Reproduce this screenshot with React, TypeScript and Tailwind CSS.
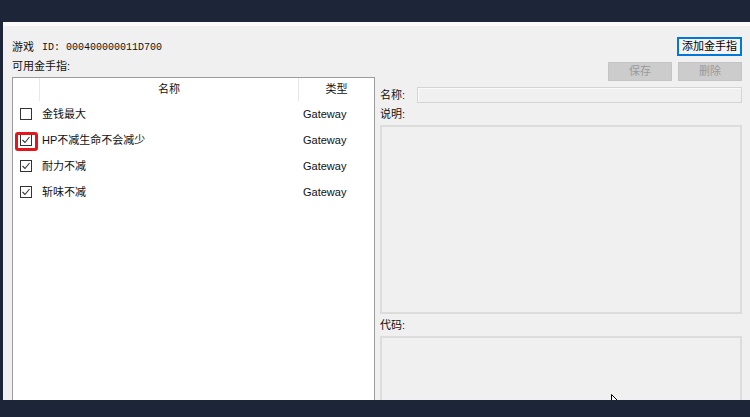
import React from 'react';

const cjk = '"Liberation Sans", "Noto Sans CJK SC", sans-serif';

const rows = [
  { name: '金钱最大', type: 'Gateway', checked: false, mark: false },
  { name: 'HP不减生命不会减少', type: 'Gateway', checked: true, mark: true },
  { name: '耐力不减', type: 'Gateway', checked: true, mark: false },
  { name: '斩味不减', type: 'Gateway', checked: true, mark: false },
];

const CheckBox: React.FC<{ checked: boolean; mark?: boolean }> = ({ checked, mark }) => (
  <span className="relative flex h-[12px] w-[12px] items-center justify-center border border-[#333333] bg-white">
    {checked && (
      <svg width="10" height="10" viewBox="0 0 10 10">
        <path d="M1.5 5 L4 7.5 L8.5 2" fill="none" stroke="#333333" strokeWidth="1.1" />
      </svg>
    )}
    {mark && (
      <span className="absolute left-[-6px] top-[-3px] h-[19px] w-[23px] rounded-[3px] border-[3px] border-[#e3161c]" />
    )}
  </span>
);

const App: React.FC = () => {
  return (
    <div
      className="flex h-[417px] w-[750px] flex-col overflow-hidden bg-[#1c2638] pl-[3px] pt-[22px] text-[11px] text-[#111111]"
      style={{ fontFamily: cjk }}
    >
      <div className="relative h-[378px] overflow-hidden border-t-[4px] border-[#fafafa] bg-[#f0f0f0] pl-[9px] pr-[8px]">
        {/* top row */}
        <div className="mt-[11px] flex h-[19px] items-center justify-between">
          <div className="flex items-center pt-[2px]">
            <span>游戏</span>
            <span className="ml-[8px] text-[10px]" style={{ fontFamily: '"Liberation Mono", monospace' }}>
              ID: 000400000011D700
            </span>
          </div>
          <button className="h-[19px] w-[65px] border-2 border-[#0078d7] bg-[#f4f4f4] text-[11px] leading-none text-black">
            添加金手指
          </button>
        </div>

        <div className="flex">
          {/* left column */}
          <div className="flex w-[363px] flex-col">
            <div className="flex h-[21px] items-center">可用金手指:</div>
            <div className="h-[330px] border border-[#9c9c9c] bg-white">
              <div className="flex h-[23px] items-center">
                <div className="h-full w-[27px] border-r border-[#e8e8e8]" />
                <div className="flex h-full w-[259px] items-center justify-center border-r border-[#e8e8e8]">名称</div>
                <div className="flex h-full flex-1 items-center justify-center">类型</div>
              </div>
              {rows.map((r) => (
                <div key={r.name} className="flex h-[26px] items-center">
                  <div className="flex w-[27px] items-center pl-[7px]">
                    <CheckBox checked={r.checked} mark={r.mark} />
                  </div>
                  <div className="w-[260px] pl-[2px]">{r.name}</div>
                  <div className="pl-[3px]">{r.type}</div>
                </div>
              ))}
            </div>
          </div>

          {/* right column */}
          <div className="ml-[5px] flex flex-1 flex-col">
            <div className="mt-[6px] flex h-[19px] justify-end gap-[6px]">
              <button className="h-[19px] w-[64px] border border-[#c4c4c4] bg-[#cccccc] text-[11px] leading-none text-[#9a9a9a]">
                保存
              </button>
              <button className="h-[19px] w-[64px] border border-[#c4c4c4] bg-[#cccccc] text-[11px] leading-none text-[#9a9a9a]">
                删除
              </button>
            </div>
            <div className="mt-[6px] flex h-[16px] items-center">
              <span className="w-[37px]">名称:</span>
              <div className="h-[16px] flex-1 border border-[#d4d4d4] bg-[#f0f0f0] shadow-[inset_1px_1px_0_#fafafa]" />
            </div>
            <div className="mt-[1px] flex h-[21px] items-center">说明:</div>
            <div className="h-[189px] border-2 border-[#dcdcdc] bg-[#f0f0f0]" />
            <div className="flex h-[22px] items-center">代码:</div>
            <div className="h-[100px] border-2 border-[#dcdcdc] bg-[#f0f0f0]" />
          </div>
        </div>

        {/* mouse pointer */}
        <svg className="absolute left-[608px] top-[368px]" width="10" height="14" viewBox="0 0 10 14">
          <path d="M0.5 0.5 L0.5 11 L3 8.5 L5 13 L6.5 12.3 L4.6 8 L8 8 Z" fill="#ffffff" stroke="#000000" strokeWidth="1" />
        </svg>
      </div>
    </div>
  );
};

export default App;
